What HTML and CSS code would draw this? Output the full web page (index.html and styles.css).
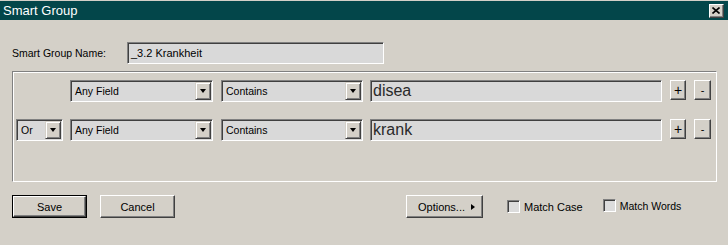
FILE: index.html
```html
<!DOCTYPE html>
<html>
<head>
<meta charset="utf-8">
<title>Smart Group</title>
<link rel="stylesheet" href="styles.css">
</head>
<body>
<div class="window">
  <div class="titlebar">
    <span class="title">Smart Group</span>
    <div class="close"><svg width="8" height="7" viewBox="0 0 8 7"><path d="M0.5 0.5 L7.5 6.5 M7.5 0.5 L0.5 6.5" stroke="#000" stroke-width="1.6"/></svg></div>
  </div>
  <div class="content">
    <div class="name-row">
      <span class="label">Smart Group Name:</span>
      <div class="field name-field">_3.2 Krankheit</div>
    </div>
    <div class="group">
      <div class="rule">
        <div class="conj-space"></div>
        <div class="select field-sel"><span class="sel-text">Any Field</span><span class="arrow"><i></i></span></div>
        <div class="select op-sel"><span class="sel-text">Contains</span><span class="arrow"><i></i></span></div>
        <div class="field value">disea</div>
        <div class="btn small plus">+</div>
        <div class="btn small minus">-</div>
      </div>
      <div class="rule">
        <div class="select conj-sel"><span class="sel-text">Or</span><span class="arrow"><i></i></span></div>
        <div class="select field-sel"><span class="sel-text">Any Field</span><span class="arrow"><i></i></span></div>
        <div class="select op-sel"><span class="sel-text">Contains</span><span class="arrow"><i></i></span></div>
        <div class="field value">krank</div>
        <div class="btn small plus">+</div>
        <div class="btn small minus">-</div>
      </div>
    </div>
    <div class="actions">
      <div class="btn default"><span>Save</span></div>
      <div class="btn cancel">Cancel</div>
      <div class="btn options">Options...<i class="tri"></i></div>
      <label class="check case"><span class="box"></span>Match Case</label>
      <label class="check words"><span class="box"></span>Match Words</label>
    </div>
  </div>
</div>
</body>
</html>
```
FILE: styles.css
```css
html, body {
  margin: 0;
  padding: 0;
  background: #d4d0c8;
}
body {
  font-family: "Liberation Sans", Arial, sans-serif;
  font-size: 10.5px;
  color: #000;
}
.window {
  width: 728px;
  height: 245px;
  background: #d4d0c8;
}
.titlebar {
  margin-top: 1px;
  height: 19px;
  background: #03464a;
  display: flex;
  align-items: center;
  justify-content: space-between;
  padding: 0 4px 0 3px;
  box-sizing: border-box;
}
.title {
  color: #fff;
  font-size: 13px;
  line-height: 19px;
}
.close {
  width: 15px;
  height: 14px;
  box-sizing: border-box;
  background: #d4d0c8;
  border-top: 1px solid #fff;
  border-left: 1px solid #fff;
  border-right: 1px solid #404040;
  border-bottom: 1px solid #404040;
  box-shadow: inset -1px -1px 0 #808080;
  display: flex;
  align-items: center;
  justify-content: center;
  padding: 0 1px 1px 0;
}
.close svg { display: block; }
.content {
  padding: 0 11px 0 12px;
}
.name-row {
  margin-top: 22px;
  display: flex;
  align-items: center;
  height: 22px;
}
.label {
  width: 115px;
}
.field {
  box-sizing: border-box;
  height: 22px;
  background: #d9d9d9;
  border-top: 1px solid #808080;
  border-left: 1px solid #808080;
  border-right: 1px solid #fff;
  border-bottom: 1px solid #fff;
  box-shadow: inset 1px 1px 0 #404040;
  display: flex;
  align-items: center;
  padding-left: 3px;
  white-space: nowrap;
}
.name-field {
  width: 257px;
  font-size: 11px;
  padding-left: 3px;
}
.group {
  margin-top: 7px;
  height: 111px;
  box-sizing: border-box;
  border-top: 1px solid #808080;
  border-left: 1px solid #808080;
  border-right: 1px solid #fff;
  border-bottom: 1px solid #fff;
  box-shadow: inset 1px 1px 0 #fff;
  padding: 8px 0 0 3px;
}
.rule {
  display: flex;
  align-items: flex-start;
  height: 22px;
}
.rule + .rule {
  margin-top: 17px;
}
.conj-space, .conj-sel {
  width: 47px;
  flex: none;
}
.select {
  box-sizing: border-box;
  height: 22px;
  background: #d9d9d9;
  border-top: 1px solid #808080;
  border-left: 1px solid #808080;
  border-right: 1px solid #fff;
  border-bottom: 1px solid #fff;
  box-shadow: inset 1px 1px 0 #404040;
  display: flex;
  align-items: center;
  padding: 1px 1px 1px 2px;
  flex: none;
}
.sel-text {
  flex: 1;
  padding-left: 2px;
  white-space: nowrap;
}
.arrow {
  width: 16px;
  height: 18px;
  box-sizing: border-box;
  background: #d4d0c8;
  border-top: 1px solid #d4d0c8;
  border-left: 1px solid #d4d0c8;
  border-right: 1px solid #404040;
  border-bottom: 1px solid #404040;
  box-shadow: inset 1px 1px 0 #fff, inset -1px -1px 0 #808080;
  display: flex;
  align-items: center;
  justify-content: center;
}
.arrow i {
  display: block;
  width: 0;
  height: 0;
  border-left: 3.5px solid transparent;
  border-right: 3.5px solid transparent;
  border-top: 4px solid #000;
}
.field-sel {
  width: 143px;
  margin-left: 7px;
}
.op-sel {
  width: 142px;
  margin-left: 8px;
}
.value {
  width: 292px;
  margin-left: 7px;
  font-size: 16px;
  padding-left: 2px;
  color: #2a2a2a;
}
.btn {
  box-sizing: border-box;
  background: #d4d0c8;
  border-top: 1px solid #fff;
  border-left: 1px solid #fff;
  border-right: 1px solid #404040;
  border-bottom: 1px solid #404040;
  box-shadow: inset -1px -1px 0 #808080;
  display: flex;
  align-items: center;
  justify-content: center;
  flex: none;
}
.small {
  height: 20px;
  font-size: 14px;
  padding-bottom: 1px;
}
.plus {
  width: 16px;
  margin-left: 8px;
}
.minus {
  width: 17px;
  margin-left: 8px;
  font-size: 11px;
}
.actions {
  margin-top: 13px;
  display: flex;
  align-items: center;
  height: 23px;
}
.actions .btn {
  height: 23px;
  font-size: 11px;
}
.default {
  width: 75px;
  border: 1px solid #000;
  box-shadow: none;
  padding: 0;
}
.default span {
  flex: 1;
  align-self: stretch;
  display: flex;
  align-items: center;
  justify-content: center;
  border-top: 1px solid #fff;
  border-left: 1px solid #fff;
  border-right: 1px solid #404040;
  border-bottom: 1px solid #404040;
  box-shadow: inset -1px -1px 0 #808080;
  box-sizing: border-box;
}
.cancel {
  width: 75px;
  margin-left: 13px;
}
.options {
  width: 77px;
  margin-left: 231px;
  padding-left: 4px;
}
.tri {
  display: inline-block;
  width: 0;
  height: 0;
  border-top: 3.5px solid transparent;
  border-bottom: 3.5px solid transparent;
  border-left: 4px solid #000;
  margin-left: 6px;
}
.check {
  display: flex;
  align-items: center;
  font-size: 11px;
}
.check .box {
  width: 13px;
  height: 13px;
  box-sizing: border-box;
  background: #dcdcdc;
  border-top: 1px solid #808080;
  border-left: 1px solid #808080;
  border-right: 1px solid #fff;
  border-bottom: 1px solid #fff;
  box-shadow: inset 1px 1px 0 #404040;
  margin-right: 4px;
}
.case {
  margin-left: 24px;
}
.words {
  margin-left: 20px;
  margin-bottom: 2px;
  font-size: 10.5px;
}
```
